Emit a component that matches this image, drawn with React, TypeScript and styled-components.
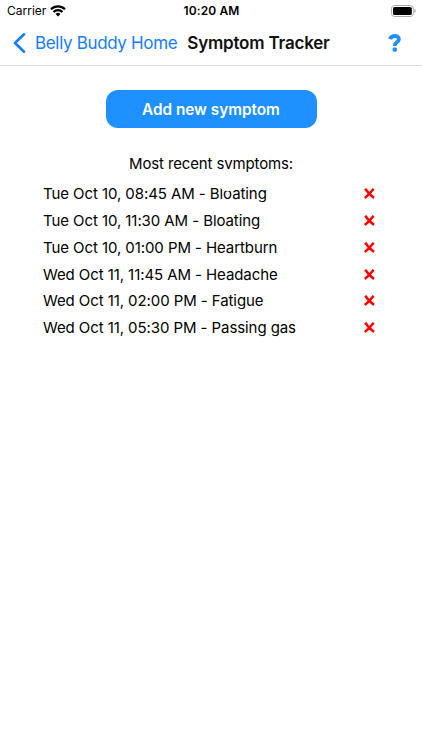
import React from 'react';
import styled, { createGlobalStyle } from 'styled-components';

const Global = createGlobalStyle`
  * { box-sizing: border-box; }
  body { margin: 0; background: #fff; color: #000; font-family: Inter, "Liberation Sans", sans-serif; }
`;

const Screen = styled.main`
  display: flex;
  flex-direction: column;
  width: 422px;
  height: 750px;
  overflow: hidden;
`;

const StatusBar = styled.div`
  display: grid;
  grid-template-columns: 1fr auto 1fr;
  align-items: center;
  height: 21px;
  padding: 0 6px 0 7px;
  font-size: 12px;
`;

const Carrier = styled.div`
  display: flex;
  align-items: center;
  gap: 4px;
`;

const Clock = styled.div`
  font-weight: 600;
  letter-spacing: 0.1px;
`;

const Power = styled.div`
  display: flex;
  justify-content: flex-end;
`;

const NavBar = styled.header`
  display: flex;
  align-items: center;
  height: 45px;
  padding: 0 20px 0 13px;
  border-bottom: 1px solid #dcdcdc;
  white-space: nowrap;
`;

const Back = styled.button`
  display: flex;
  align-items: center;
  gap: 9px;
  padding: 0;
  border: 0;
  background: none;
  color: #147efb;
  font: 400 17px Inter, sans-serif;
  letter-spacing: -0.34px;
`;

const Title = styled.h1`
  margin: 0 0 0 10px;
  flex: 1;
  color: #111;
  font-size: 17px;
  font-weight: 600;
  letter-spacing: -0.2px;
`;

const Content = styled.section`
  display: flex;
  flex-direction: column;
  align-items: center;
  padding-top: 24px;
`;

const AddButton = styled.button`
  width: 211px;
  height: 38px;
  border: 0;
  border-radius: 12px;
  background: #1e90ff;
  color: #fff;
  font: 600 15.3px Inter, sans-serif;
`;

const Heading = styled.p`
  position: relative;
  margin: 26px 0 6.4px;
  font-size: 15px;
  line-height: 20px;
  letter-spacing: -0.14px;
`;

const TapSpot = styled.span`
  position: absolute;
  z-index: 1;
  left: 88px;
  top: 15px;
  width: 22px;
  height: 22px;
  border-radius: 50%;
  background: #fff;
`;

const List = styled.ul`
  width: 100%;
  margin: 0;
  padding: 0 46px 0 43px;
  list-style: none;
`;

const Row = styled.li`
  display: flex;
  align-items: center;
  justify-content: space-between;
  height: 26.8px;
  font-size: 15px;
  letter-spacing: -0.08px;
`;

const symptoms = [
  'Tue Oct 10, 08:45 AM - Bloating',
  'Tue Oct 10, 11:30 AM - Bloating',
  'Tue Oct 10, 01:00 PM - Heartburn',
  'Wed Oct 11, 11:45 AM - Headache',
  'Wed Oct 11, 02:00 PM - Fatigue',
  'Wed Oct 11, 05:30 PM - Passing gas',
];

export default function App() {
  return (
    <Screen>
      <Global />
      <StatusBar>
        <Carrier>
          Carrier
          <svg width="16" height="12" viewBox="0 0 16 12" fill="none" stroke="#000" strokeWidth="2.2">
            <path d="M1 4.2a10 10 0 0 1 14 0M3.5 7a6.4 6.4 0 0 1 9 0" />
            <path d="M8 11.5 5.6 9a3.5 3.5 0 0 1 4.8 0z" fill="#000" stroke="none" />
          </svg>
        </Carrier>
        <Clock>10:20 AM</Clock>
        <Power>
          <svg width="25" height="12" viewBox="0 0 25 12">
            <rect x=".5" y=".5" width="21.8" height="11" rx="3" fill="none" stroke="#aaa" />
            <rect x="2" y="2" width="18.8" height="8" rx="1.6" />
            <path d="M23.5 4v4c1.6-.7 1.6-3.3 0-4z" fill="#999" />
          </svg>
        </Power>
      </StatusBar>
      <NavBar>
        <Back>
          <svg width="13" height="20" viewBox="0 0 13 20" fill="none" stroke="#147efb" strokeWidth="2.6" strokeLinecap="round" strokeLinejoin="round">
            <path d="M11 1.3 2 10l9 8.7" />
          </svg>
          Belly Buddy Home
        </Back>
        <Title>Symptom Tracker</Title>
        <svg width="14" height="18" viewBox="0 0 14 18" fill="none" stroke="#1e90ff" strokeWidth="3.8">
          <path d="M2 5.2C3.4.9 10.9.9 10.9 5.2 10.9 8.3 6.7 7.8 6.7 12" />
          <rect x="4.6" y="13.4" width="4.3" height="4.3" rx="1.4" fill="#1e90ff" stroke="none" />
        </svg>
      </NavBar>
      <Content>
        <AddButton>Add new symptom</AddButton>
        <Heading>
          Most recent symptoms:
          <TapSpot />
        </Heading>
        <List>
          {symptoms.map((s) => (
            <Row key={s}>
              {s}
              <svg width="13" height="13" viewBox="0 0 13 13" fill="none" stroke="#f00" strokeWidth="2.5">
                <path d="M2.2 1.8C4 4.5 7.5 8.5 11 10.9M10.6 1.8C8.5 4.5 5.2 8.5 1.8 10.9" />
              </svg>
            </Row>
          ))}
        </List>
      </Content>
    </Screen>
  );
}
